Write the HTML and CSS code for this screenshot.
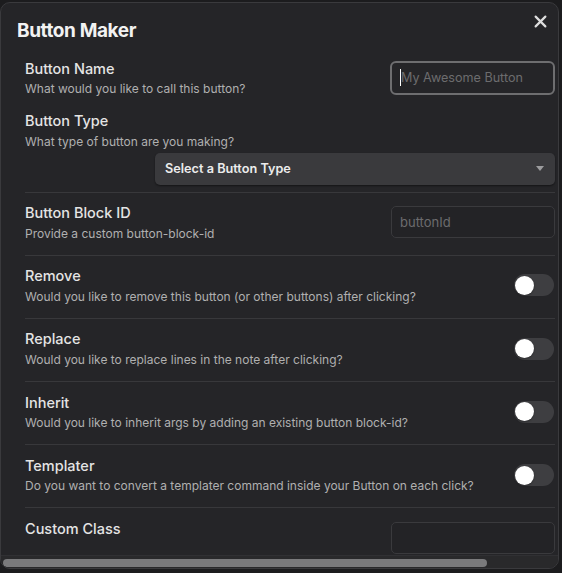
FILE: index.html
```html
<!DOCTYPE html>
<html>
<head>
<meta charset="utf-8">
<link rel="stylesheet" href="styles.css">
</head>
<body>
<div class="modal">
  <div class="header">
    <div class="title">Button Maker</div>
    <div class="close">
      <svg width="12" height="12" viewBox="0 0 12 12"><path d="M1.5 1.5 L10.5 10.5 M10.5 1.5 L1.5 10.5" stroke="#dedede" stroke-width="2" stroke-linecap="round"/></svg>
    </div>
  </div>
  <div class="scroll">
    <div class="setting first">
      <div class="info">
        <div class="name">Button Name</div>
        <div class="desc">What would you like to call this button?</div>
      </div>
      <div class="input focused"><span class="caret"></span><span class="ph">My Awesome Button</span></div>
    </div>
    <div class="setting stacked">
      <div class="info">
        <div class="name">Button Type</div>
        <div class="desc">What type of button are you making?</div>
      </div>
      <div class="select-row">
        <div class="select"><span>Select a Button Type</span><span class="arrow"></span></div>
      </div>
    </div>
    <div class="setting bordered">
      <div class="info">
        <div class="name">Button Block ID</div>
        <div class="desc">Provide a custom button-block-id</div>
      </div>
      <div class="input"><span class="ph">buttonId</span></div>
    </div>
    <div class="setting bordered">
      <div class="info">
        <div class="name">Remove</div>
        <div class="desc">Would you like to remove this button (or other buttons) after clicking?</div>
      </div>
      <div class="toggle"><span class="knob"></span></div>
    </div>
    <div class="setting bordered">
      <div class="info">
        <div class="name">Replace</div>
        <div class="desc">Would you like to replace lines in the note after clicking?</div>
      </div>
      <div class="toggle"><span class="knob"></span></div>
    </div>
    <div class="setting bordered">
      <div class="info">
        <div class="name">Inherit</div>
        <div class="desc">Would you like to inherit args by adding an existing button block-id?</div>
      </div>
      <div class="toggle"><span class="knob"></span></div>
    </div>
    <div class="setting bordered">
      <div class="info">
        <div class="name">Templater</div>
        <div class="desc">Do you want to convert a templater command inside your Button on each click?</div>
      </div>
      <div class="toggle"><span class="knob"></span></div>
    </div>
    <div class="setting bordered last">
      <div class="info">
        <div class="name">Custom Class</div>
      </div>
      <div class="input"></div>
    </div>
  </div>
  <div class="hscroll"><div class="thumb"></div></div>
</div>
</body>
</html>
```
FILE: styles.css
```css
html, body {
  margin: 0;
  padding: 0;
  background: #1c1c1e;
  height: 573px;
  overflow: hidden;
}
body {
  font-family: "Inter", "Noto Sans", sans-serif;
  color: #dadada;
}
.modal {
  margin-top: 2px;
  width: 559px;
  height: 567px;
  box-sizing: border-box;
  background: #252528;
  border: 1px solid #3a3a3d;
  border-radius: 10px;
  overflow: hidden;
  display: flex;
  flex-direction: column;
}
.header {
  display: flex;
  justify-content: space-between;
  align-items: flex-start;
  height: 40px;
  box-sizing: border-box;
  padding: 12px 11px 0 16px;
  flex: none;
}
.title {
  margin-top: 4px;
  font-size: 19px;
  line-height: 24px;
  font-weight: 700;
  color: #f2f2f2;
  letter-spacing: -0.4px;
}
.close {
  width: 13px;
  height: 13px;
}
.close svg { display: block; width: 13px; height: 13px; }
.scroll {
  flex: 1;
  overflow: hidden;
  padding: 15.5px 3px 0 24px;
}
.setting {
  display: flex;
  align-items: center;
  justify-content: space-between;
}
.setting.first {
  padding: 0 0 14px;
}
.setting.stacked {
  flex-direction: column;
  align-items: stretch;
  padding: 0 0 7px;
}
.setting.bordered {
  border-top: 1px solid #38383b;
  padding: 10.5px 0 13.2px;
}
.setting.last {
  align-items: flex-start;
}
.setting.last .input {
  margin-top: 3px;
}
.info {
  display: flex;
  flex-direction: column;
}
.name {
  font-size: 14.5px;
  line-height: 20px;
  color: #e4e4e4;
  font-weight: 500;
}
.desc {
  margin-top: 1.5px;
  font-size: 12px;
  line-height: 17px;
  color: #b0b0b0;
  white-space: nowrap;
}
.input {
  width: 164px;
  height: 32px;
  box-sizing: border-box;
  border: 1px solid #3a3a3d;
  border-radius: 5px;
  background: #232326;
  display: flex;
  align-items: center;
  padding-left: 8px;
  flex: none;
}
.input.focused {
  width: 165px;
  height: 34px;
  border: 2px solid #6e6e70;
  border-radius: 6px;
  background: #252528;
  padding-left: 8px;
}
.ph {
  font-size: 13px;
  color: #6c6c6e;
}
.input.focused .ph {
  font-size: 12.6px;
}
.caret {
  display: inline-block;
  width: 1px;
  height: 17px;
  background: #ffffff;
}
.select-row {
  display: flex;
  justify-content: flex-end;
  margin-top: 3px;
}
.select {
  width: 400px;
  height: 32px;
  box-sizing: border-box;
  background: #3a3a3d;
  border-radius: 5px;
  box-shadow: 0 1px 2px rgba(0,0,0,0.45);
  display: flex;
  align-items: center;
  justify-content: space-between;
  padding: 0 10px 0 10px;
  font-size: 12.7px;
  font-weight: 600;
  color: #ececec;
}
.arrow {
  width: 0;
  height: 0;
  border-left: 4px solid transparent;
  border-right: 4px solid transparent;
  border-top: 5px solid #9c9c9e;
  margin-right: 1px;
}
.toggle {
  width: 40px;
  height: 22px;
  border-radius: 11px;
  background: #3e3e41;
  display: flex;
  align-items: center;
  padding-left: 1px;
  box-sizing: border-box;
  flex: none;
  margin-right: 1px;
}
.knob {
  width: 19px;
  height: 19px;
  border-radius: 50%;
  background: #ffffff;
  box-shadow: 0 1px 2px rgba(0,0,0,0.3);
}
.hscroll {
  flex: none;
  height: 13px;
  background: #29292b;
  border-top: 1px solid #303033;
  box-sizing: border-box;
  padding: 3px 0 0 2px;
}
.thumb {
  width: 484px;
  height: 8px;
  border-radius: 4px;
  background: #7a7a7c;
}
```
